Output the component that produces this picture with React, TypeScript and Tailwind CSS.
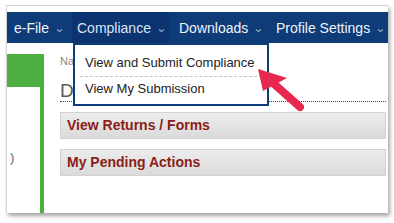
import React from "react";

const Caret = () => (
  <svg width="7" height="5" viewBox="0 0 7 5" className="ml-[7px] mt-[6px]">
    <path d="M1 1.5 L3.5 3.5 L6 1.5" stroke="#8fa6c4" strokeWidth="1.2" fill="none" />
  </svg>
);

const NavItem = ({ label, className }: { label: string; className: string }) => (
  <div className={"flex h-full items-center " + className}>
    <span>{label}</span>
    <Caret />
  </div>
);

export default function App() {
  return (
    <div className="w-[394px] h-[223px] bg-white overflow-hidden" style={{ fontFamily: '"Liberation Sans", Arial, sans-serif' }}>
      <div className="relative ml-[6px] mt-[5px] w-[382px] h-[208px] bg-white border-l border-t border-[#d6d6d6] shadow-[2px_3px_4px_rgba(0,0,0,0.35)] flex flex-col">
        <div className="mt-[6px] h-[31px] bg-[#0e3c79] flex text-[14px] text-[#eef3fa] leading-none">
          <NavItem label="e-File" className="w-[65px] pl-[7px]" />
          <NavItem label="Compliance" className="w-[97px] pl-[5px] bg-[#0b3470] text-[#d9e6f6]" />
          <NavItem label="Downloads" className="w-[98px] pl-[10px]" />
          <NavItem label="Profile Settings" className="pl-[9px]" />
        </div>
        <div className="flex flex-1">
          <div className="w-[37px] flex flex-col pt-[11px]">
            <div className="h-[33px] bg-[#4caf3f]" />
            <div className="flex-1 flex">
              <div className="flex-1 relative">
                <span className="absolute left-[3px] top-[61px] text-[13px] text-[#666]">)</span>
              </div>
              <div className="w-[4px] bg-[#4caf3f]" />
            </div>
          </div>
          <div className="ml-[16px] mr-[2px] flex-1 flex flex-col">
            <div className="mt-[12px] h-[13px] text-[11px] leading-[13px] text-[#8a8a8a]">Na</div>
            <div className="mt-[13px] h-[20px] text-[19px] leading-[20px] text-[#5a5a5a]">D</div>
            <div className="border-t border-dotted border-[#444]" />
            <div className="mt-[10px] h-[27px] flex items-center pl-[6px] bg-gradient-to-b from-[#ececec] to-[#dadada] border border-[#d2d2d2] text-[14px] font-bold text-[#8a1d17]">
              View Returns / Forms
            </div>
            <div className="mt-[10px] h-[27px] flex items-center pl-[6px] bg-gradient-to-b from-[#ececec] to-[#dadada] border border-[#d2d2d2] text-[14px] font-bold text-[#8a1d17]">
              My Pending Actions
            </div>
          </div>
        </div>

        <div className="absolute left-[66px] top-[37px] w-[196px] h-[63px] bg-white border-2 border-[#0e3c79] flex flex-col text-[13px] text-[#222]">
          <div className="h-[31px] flex items-center pl-[10px] pt-[4px]">View and Submit Compliance</div>
          <div className="mx-[5px] border-t border-dashed border-[#c4c4c4]" />
          <div className="flex-1 flex items-center pl-[10px] pb-[3px]">View My Submission</div>
        </div>

        <svg className="absolute left-0 top-0" width="382" height="208" viewBox="6 5 382 208">
          <polygon points="257,68 262,90 286,77" fill="#e8294f" />
          <line x1="272" y1="82" x2="299" y2="106" stroke="#e8294f" strokeWidth="8" strokeLinecap="round" />
        </svg>
      </div>
    </div>
  );
}
